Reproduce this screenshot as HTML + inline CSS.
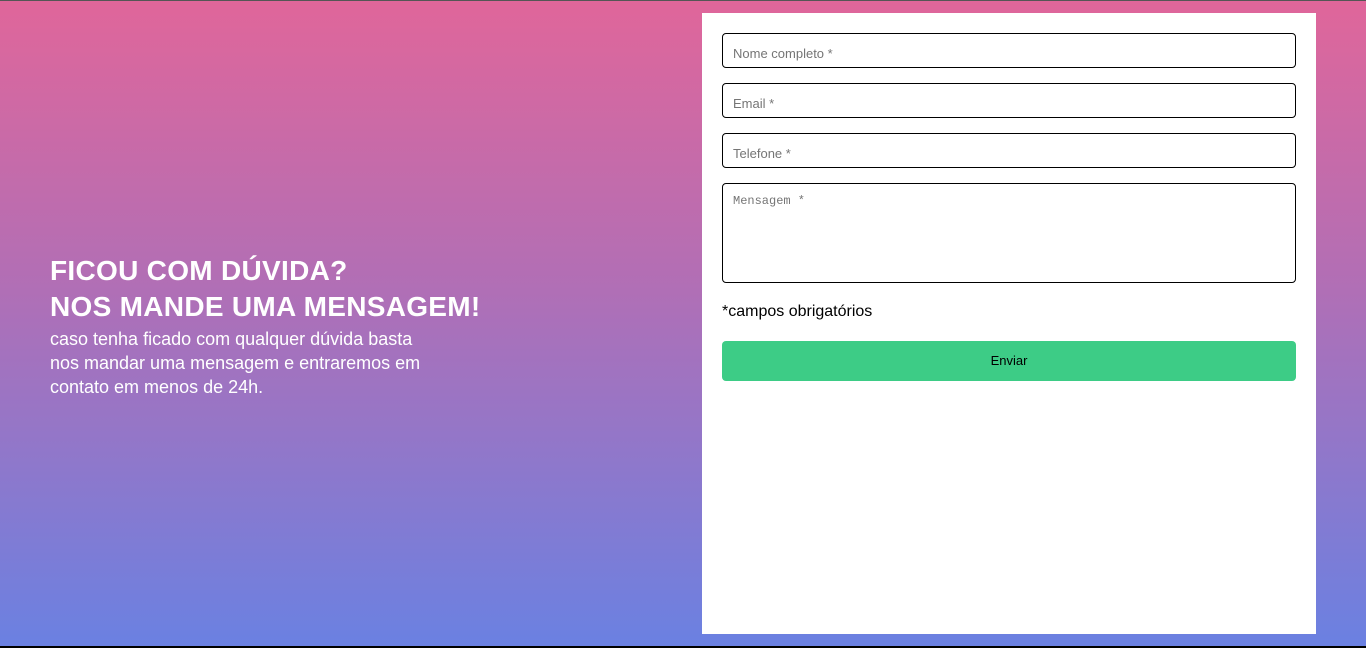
<!DOCTYPE html>
<html><head><meta charset="utf-8"><style>
*{box-sizing:border-box;margin:0;padding:0}
html,body{width:1366px;height:648px;overflow:hidden}
body{position:relative;font-family:"Liberation Sans",sans-serif;background:linear-gradient(180deg,#e0669a 0%,#b06fb6 45%,#6a81e2 100%);border-top:1px solid #555}
.bot{position:absolute;left:0;right:0;bottom:0;height:2px;background:#000}
.left{position:absolute;left:50px;top:252px;color:#fff}
h1{font-size:28px;line-height:36px;font-weight:bold;letter-spacing:0.3px}
p{font-size:18px;line-height:24px;width:392px;margin-top:2px}
.panel{position:absolute;left:702px;top:12px;width:614px;height:621px;background:#fff}
.in{position:absolute;left:20px;width:574px;height:35px;border:1px solid #000;border-radius:4px;font-size:13px;color:#757575;padding:0 10px;line-height:40px}
.ta{height:100px;font-family:"Liberation Mono",monospace;font-size:12px;line-height:14px;padding-top:10px}
.req{position:absolute;left:20px;top:290px;font-size:16px;color:#000}
.btn{position:absolute;left:20px;top:328px;width:574px;height:40px;background:#3dcc86;border-radius:4px;font-size:13px;text-align:center;line-height:40px;color:#000}
</style></head><body>
<div class="left"><h1>FICOU COM DÚVIDA?<br>NOS MANDE UMA MENSAGEM!</h1>
<p>caso tenha ficado com qualquer dúvida basta nos mandar uma mensagem e entraremos em contato em menos de 24h.</p></div>
<div class="panel">
<div class="in" style="top:20px">Nome completo *</div>
<div class="in" style="top:70px">Email *</div>
<div class="in" style="top:120px">Telefone *</div>
<div class="in ta" style="top:170px">Mensagem *</div>
<div class="req">*campos obrigatórios</div>
<div class="btn">Enviar</div>
</div>
<div class="bot"></div>
</body></html>
